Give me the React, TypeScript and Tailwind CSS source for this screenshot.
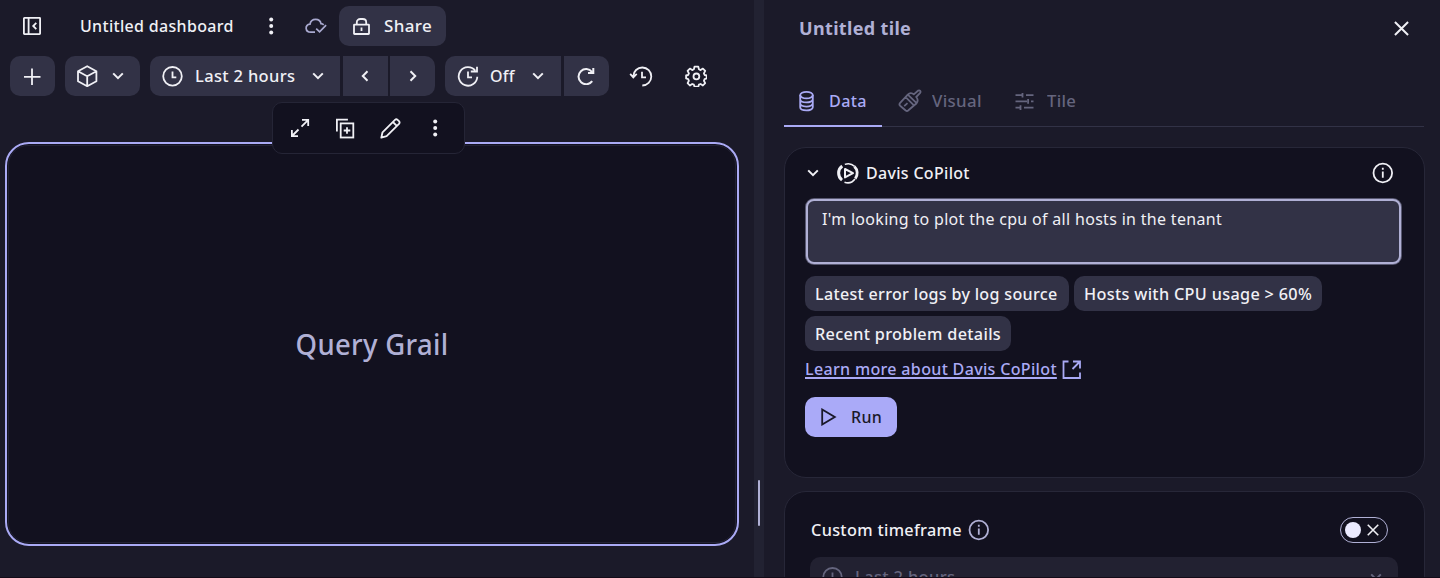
import type { ReactNode } from "react";

type IconProps = { className?: string; children: ReactNode; w?: number; h?: number; sw?: number };

function Icon({ className = "", children, w = 22, h = 22, sw = 1.8 }: IconProps) {
  return (
    <svg
      width={w}
      height={h}
      viewBox={`0 0 ${w} ${h}`}
      fill="none"
      stroke="currentColor"
      strokeWidth={sw}
      className={`shrink-0 ${className}`}
    >
      {children}
    </svg>
  );
}

function Narrow({ children, className = "scale-x-94" }: { children: ReactNode; className?: string }) {
  return <span className={`inline-block origin-left whitespace-nowrap ${className}`}>{children}</span>;
}

const ChevronDown = ({ className = "" }: { className?: string }) => (
  <Icon w={12} h={8} className={className} sw={2}>
    <path d="M1.2 1.4 6 6.2l4.8-4.8" />
  </Icon>
);

const Dots = () => (
  <Icon w={6} h={18}>
    <g fill="currentColor" stroke="none">
      <circle cx="3.2" cy="2.4" r="2" />
      <circle cx="3.2" cy="9" r="2" />
      <circle cx="3.2" cy="15.6" r="2" />
    </g>
  </Icon>
);

const Clock = ({ className = "" }: { className?: string }) => (
  <Icon className={className}>
    <circle cx="10.5" cy="11.300" r="9.3" />
    <path d="M10.500 6.500v5.800h3.800" />
  </Icon>
);

const Info = ({ className = "" }: { className?: string }) => (
  <Icon className={className}>
    <circle cx="10.800" cy="11" r="9.300" />
    <path d="M10.800 9.400v6.400M10.800 5.800v2" />
  </Icon>
);

const Cross = ({ size }: { size: number }) => (
  <svg width={size} height={size} viewBox="0 0 16 16" fill="none" stroke="currentColor" strokeWidth="2.1" className="shrink-0">
    <path d="M1 1l14 14M15 1L1 15" />
  </svg>
);

function Header() {
  return (
    <div className="flex h-[46px] items-center pt-1.5 pl-[23px]">
      <Icon w={18} h={18} sw={1.8}>
        <rect x="0.9" y="0.9" width="16.2" height="16.2" rx="0.5" />
        <path d="M5.6 1v16M13.3 5.800 10.200 9l3.100 3.200" />
      </Icon>
      <div className="ml-[39px] w-[153px] font-medium">
        <Narrow>Untitled dashboard</Narrow>
      </div>
      <div className="ml-[35px]">
        <Dots />
      </div>
      <Icon w={22} h={16} sw={1.7} className="ml-[31px] text-[#a9a9cf]">
        <path d="M10 14.200H5.800C0 14.200-.6 6.600 5 6.200 5.500 3.200 8 1.400 10.700 1.400c2.600 0 4.800 1.700 5.300 4.300 1.200.1 2 .4 2.700 1.100" />
        <path d="M11.200 10.600l3.400 3.300 6.500-6.700" />
      </Icon>
      <button className="ml-3 flex h-10 w-[107px] items-center rounded-[10px] bg-[#323246] pl-3.5">
        <Icon w={17} h={18}>
          <rect x="1" y="7.600" width="15" height="9.400" rx="0.500" />
          <path d="M3.800 7.600V5.200C3.800 3.200 5.400 2 7.300 2h2.400c2 0 3.500 1.200 3.500 3.200v2.400M8.500 10.400v3.600" />
        </Icon>
        <span className="ml-3.5 font-medium">
          <Narrow className="scale-x-100">Share</Narrow>
        </span>
      </button>
    </div>
  );
}

function Toolbar() {
  return (
    <div className="mt-2.5 ml-2.5 flex h-10 items-center">
      <button className="flex h-10 w-[45px] items-center justify-center rounded-[10px] bg-[#323246]">
        <Icon w={17} h={17}>
          <path d="M8 0.500v16.500M0 8.800h16.500" />
        </Icon>
      </button>
      <button className="ml-2.5 flex h-10 w-[75px] items-center rounded-[10px] bg-[#323246] pl-3">
        <Icon sw={1.8}>
          <path strokeLinejoin="round" d="M10.200 1.200 19.400 6.200v10L10.200 21.200 1 16.200v-10zM1 6.200l9.200 5 9.200-5M10.200 11.200v10" />
        </Icon>
        <ChevronDown className="ml-[13px]" />
      </button>
      <div className="ml-2.5 flex gap-[2.500px]">
        <button className="flex h-10 w-[190px] items-center rounded-l-[10px] bg-[#323246] pl-3">
          <Clock />
          <div className="ml-[11px] w-[100px] text-left font-medium">
            <Narrow className="scale-x-97">Last 2 hours</Narrow>
          </div>
          <ChevronDown className="ml-[17px]" />
        </button>
        <button className="flex h-10 w-[45px] items-center justify-center bg-[#323246]">
          <Icon w={8} h={12} sw={2}>
            <path d="M6.500 1.300 1.800 6l4.700 4.700" />
          </Icon>
        </button>
        <button className="flex h-10 w-[45px] items-center justify-center rounded-r-[10px] bg-[#323246]">
          <Icon w={8} h={12} sw={2}>
            <path d="M1.500 1.300 6.200 6l-4.700 4.700" />
          </Icon>
        </button>
      </div>
      <div className="ml-2.5 flex gap-[2.500px]">
        <button className="flex h-10 w-[116px] items-center rounded-l-[10px] bg-[#323246] pl-3">
          <Icon>
            <path d="M18.200 5.500A9.300 9.300 0 1 0 20.300 11.800M13.800 6.500h6.200V1.700M11 6.500v5.800h4" />
          </Icon>
          <div className="ml-[11px] w-[25px] text-left font-medium">
            <Narrow className="scale-x-94">Off</Narrow>
          </div>
          <ChevronDown className="ml-[17px]" />
        </button>
        <button className="flex h-10 w-[45px] items-center justify-center rounded-r-[10px] bg-[#323246]">
          <Icon w={18} h={18} sw={2}>
            <path d="M15 4.800A7.600 7.600 0 1 0 15.200 14.200M11 6h5.300V1" />
          </Icon>
        </button>
      </div>
      <Icon w={24} className="ml-[20px]">
        <path d="M4.300 11.300A9 9 0 1 1 13.300 20.500M1.200 8.900l3.100 3.600 3.400-3.600M13 6.800v5.500h4" />
      </Icon>
      <Icon className="ml-8" sw={1.8}>
        <path
          strokeLinejoin="round"
          d="M9.500 1.600h3.800l.6 2.700 1.700.8 2.300-1.500 2.300 2.300-1.300 2.500.7 1.600 2.100.5v2.900l-2.100.7-.7 1.700 1.300 2.300-2.300 2.400-2.300-1.500-1.700.7-.6 2H9.500l-.6-2-1.700-.7-2.300 1.500-2.300-2.400 1.300-2.300-.7-1.700-2.100-.7v-2.900l2.100-.5.7-1.600-1.300-2.500L4.900 3.600l2.300 1.500 1.700-.8z"
        />
        <circle cx="11.400" cy="11.400" r="2.900" />
      </Icon>
    </div>
  );
}

function TileActions() {
  return (
    <div className="absolute top-[-42px] left-[265px] flex h-[52px] w-[193px] items-center rounded-[10px] border border-[#252536] bg-[#12111f] pl-[17px]">
      <Icon w={20} h={20}>
        <path d="M12 1.900h6.200V8M18 2.100l-6.500 6.500M8 18.100H1.900V12M2 18l6.500-6.500" />
      </Icon>
      <Icon w={20} h={21} className="ml-[25px]">
        <path d="M1.900 13.500V1.600h11" />
        <rect x="5.700" y="5.400" width="12.600" height="14.100" />
        <path d="M12 9.200v6.600M8.700 12.500h6.600" />
      </Icon>
      <Icon w={21} h={21} className="ml-[25px]" sw={1.8}>
        <path strokeLinejoin="round" d="M1.300 19.700l1.200-5.400L15 1.800q1.300-1.200 2.600 0l1.400 1.400q1.200 1.300 0 2.600L6.600 18.200zM12.900 4l4.100 4.100" />
      </Icon>
      <div className="ml-[31px]">
        <Dots />
      </div>
    </div>
  );
}

function DashboardPane() {
  return (
    <section className="flex w-[754px] shrink-0 flex-col">
      <Header />
      <Toolbar />
      <div className="relative mt-[46px] ml-[5px] h-[404px] w-[734px] rounded-[24px] border-2 border-[#aaaaf5] bg-[#12111f] p-px">
        <div className="flex h-full items-center justify-center rounded-[20px] border border-[#222233] text-[28px] font-medium text-[#b0b0d5]">
          <span className="inline-block scale-x-[0.98]">Query Grail</span>
        </div>
        <TileActions />
      </div>
    </section>
  );
}

function Tabs() {
  return (
    <div className="ml-5 flex h-[51px] w-[640px] border-b border-[#323246] text-[#65657e]">
      <div className="-mb-px flex w-[98px] items-center border-b-2 border-[#aaaaf5] pl-[15px] text-[#aaaaf5]">
        <Icon w={16} h={22}>
          <ellipse cx="7.500" cy="5.100" rx="6.300" ry="3.300" />
          <path d="M1.200 5.100v12.200c0 4.200 12.600 4.200 12.600 0V5.100M1.200 9.200c0 4.300 12.600 4.300 12.600 0M1.200 13.300c0 4.300 12.600 4.300 12.600 0" />
        </Icon>
        <span className="ml-[14px] font-medium">
          <Narrow className="scale-x-95">Data</Narrow>
        </span>
      </div>
      <div className="flex items-center pl-4">
        <Icon w={24} h={24} sw={1.8}>
          <path strokeLinejoin="round" d="M7.400 7.900l8.800 8.800M9.800 5.600 1.900 14.200q-1 1.300.2 2.500l5.600 4.800q1.400 1 2.700-.2l8.200-7.100M6.200 17.200l3.300-3" />
          <path strokeLinejoin="round" d="M9.800 5.600c2-2 4.200-2 6-.2L20 1.700q1.500-.6 2.200.2t0 2L18.200 8c1.800 2 2 4 .4 6.200z" />
        </Icon>
        <div className="ml-[10px] w-[50px] font-medium">
          <Narrow className="scale-x-99">Visual</Narrow>
        </div>
      </div>
      <div className="flex items-center pl-[33px]">
        <Icon w={19} h={18} sw={1.8}>
          <path d="M0.500 3.200h7M11 3.200h7.500M0.500 9.400h11.500M16 9.400h2.500M0.500 15.600h5M9 15.600h9.500M7.500 .9v4.600M13.100 7.100v4.600M5.500 13.300v4.600" />
        </Icon>
        <span className="ml-[13px] font-medium">
          <Narrow className="scale-x-98">Tile</Narrow>
        </span>
      </div>
    </div>
  );
}

function Suggestion({ children, className }: { children: ReactNode; className: string }) {
  return (
    <button className={`h-[35px] rounded-[10px] bg-[#323246] pl-2.5 text-left font-medium whitespace-nowrap ${className}`}>
      {children}
    </button>
  );
}

function CopilotCard() {
  return (
    <div className="mt-5 ml-5 flex h-[331px] w-[641px] shrink-0 flex-col rounded-[22px] border border-[#272738] bg-[#12111f] pl-5">
      <div className="mb-0.5 flex h-[49px] shrink-0 items-center">
        <ChevronDown className="ml-0.5" />
        <Icon className="ml-[18px]" sw={2}>
          <path d="M5.200 4A9 9 0 0 0 5 18.200" strokeWidth="3" />
          <path d="M7.800 2.400A9.300 9.300 0 0 1 17.600 4.400" strokeWidth="1.500" />
          <path d="M17.400 4.600A9 9 0 0 1 18.300 16.600" strokeWidth="2.800" />
          <path d="M18 17A9.300 9.300 0 0 1 7.500 20.200" strokeWidth="1.700" />
          <path d="M8 7v8.400l8-4.200z" strokeLinejoin="round" />
        </Icon>
        <span className="ml-[7px] font-medium">
          <Narrow>Davis CoPilot</Narrow>
        </span>
        <Info className="mr-[30px] ml-auto" />
      </div>
      <div className="ml-px h-[65px] w-[595px] shrink-0 rounded-lg border-2 border-[#b0b0d5] bg-[#323246] px-3.5 pt-1.5 leading-6 ring-1 ring-[#b0b0d5]/45">
        <Narrow>I'm looking to plot the cpu of all hosts in the tenant</Narrow>
      </div>
      <div className="mt-3 flex w-[530px] shrink-0 flex-wrap gap-[5px]">
        <Suggestion className="w-[264px]">
          <Narrow className="scale-x-[0.945]">Latest error logs by log source</Narrow>
        </Suggestion>
        <Suggestion className="w-[248px]">
          <Narrow className="scale-x-[0.955]">Hosts with CPU usage &gt; 60%</Narrow>
        </Suggestion>
        <Suggestion className="w-[206px]">
          <Narrow className="scale-x-[0.955]">Recent problem details</Narrow>
        </Suggestion>
      </div>
      <a className="mt-1.5 flex h-6 shrink-0 items-center font-medium text-[#aaaaf5]">
        <div className="w-[251px]">
          <Narrow className="scale-x-[0.944] underline decoration-[1.500px] underline-offset-2">Learn more about Davis CoPilot</Narrow>
        </div>
        <Icon w={19} h={19} className="ml-1.5">
          <path d="M6.500 1.500H1.500v16.500h16.500V12.500M11 1.500h7v7M17.500 2l-7 7" />
        </Icon>
      </a>
      <button className="mt-4 flex h-10 w-[92px] shrink-0 items-center rounded-[10px] bg-[#aaaaf8] pl-[15px] text-[#1a1929]">
        <Icon w={17} h={18}>
          <path d="M2.200 1.500v15L14.800 9z" />
        </Icon>
        <span className="ml-3.5 font-medium">
          <Narrow>Run</Narrow>
        </span>
      </button>
    </div>
  );
}

function TimeframeCard() {
  return (
    <div className="mt-[13px] ml-5 h-[160px] w-[641px] shrink-0 rounded-[22px] border border-[#272738] bg-[#12111f] pt-[25px] pl-[25px]">
      <div className="flex h-[26px] items-center">
        <div className="w-[151px] pl-[0.500px] font-medium">
          <Narrow className="scale-x-[0.955]">Custom timeframe</Narrow>
        </div>
        <Info className="ml-[7px] text-[#b0b0d5]" />
        <div className="mr-[36px] ml-auto flex h-[26px] w-12 items-center rounded-full border border-[#b0b0d5] pl-1">
          <span className="size-4 rounded-full bg-[#ebebff]" />
          <span className="ml-1.5">
            <Cross size={12} />
          </span>
        </div>
      </div>
      <div className="mt-3.5 flex h-10 w-[588px] items-center rounded-[10px] bg-[#222131] pl-3 text-[#65657e]">
        <Clock />
        <span className="ml-[11px] font-medium">
          <Narrow className="scale-x-97">Last 2 hours</Narrow>
        </span>
        <ChevronDown className="mr-4 ml-auto" />
      </div>
    </div>
  );
}

export default function App() {
  return (
    <main className="relative flex h-[578px] w-[1440px] overflow-hidden bg-[#1b1a29] font-['Noto_Sans',sans-serif] text-[17px] tracking-[0.02em] text-[#f0f0f5]">
      <DashboardPane />
      <div className="flex w-2.5 shrink-0 justify-center bg-[#222232] pt-[480px]">
        <span className="h-[46px] w-[2.500px] rounded-full bg-[#b0b0d5]" />
      </div>
      <section className="flex w-[676px] shrink-0 flex-col">
        <div className="flex h-[57px] shrink-0 items-center pr-[31px] pl-[35px]">
          <h2 className="text-[18px] font-bold text-[#b0b0d5]">Untitled tile</h2>
          <span className="ml-auto">
            <Cross size={15} />
          </span>
        </div>
        <div className="shrink-0 pt-[19px]">
          <Tabs />
        </div>
        <CopilotCard />
        <TimeframeCard />
      </section>
      <div className="absolute bottom-0 left-0 h-px w-full bg-[#130b18]" />
    </main>
  );
}
